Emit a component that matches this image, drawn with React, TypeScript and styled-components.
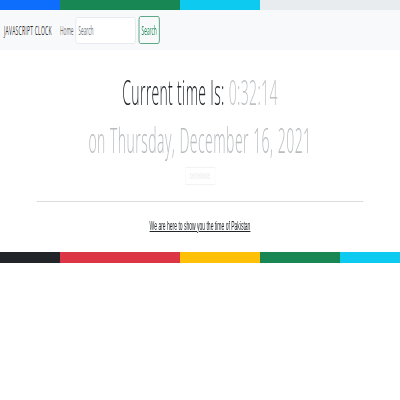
import React from 'react';
import styled, { createGlobalStyle } from 'styled-components';

// the reference is a wide page squeezed into 400px, so the layout is built
// at 1000px and squeezed once at the root
const SCALE = 0.4;

const GlobalStyle = createGlobalStyle`
  html, body {
    margin: 0;
    padding: 0;
    background: #ffffff;
    overflow: hidden;
  }
  body {
    font-family: 'Open Sans', 'Liberation Sans', sans-serif;
    color: #212529;
  }
`;

const Stage = styled.div`
  width: ${400 / SCALE}px;
  transform: scaleX(${SCALE});
  transform-origin: 0 0;
`;

const ColorBar = styled.div`
  display: flex;
  height: 10px;
`;

const Segment = styled.div<{ $color: string; $w: number }>`
  width: ${(p) => p.$w}px;
  background: ${(p) => p.$color};
`;

const Navbar = styled.nav`
  height: 40px;
  background: #f8f9fa;
  display: flex;
  align-items: center;
  padding-left: 10px;
  box-sizing: border-box;
`;

const Brand = styled.a`
  font-size: 12.5px;
  letter-spacing: 0.6px;
  color: rgba(0, 0, 0, 0.85);
  margin-right: 14px;
  text-decoration: none;
  white-space: nowrap;
  width: 126px;
`;

const NavLink = styled.a`
  font-size: 12px;
  color: rgba(0, 0, 0, 0.6);
  margin-right: 5px;
  text-decoration: none;
`;

const SearchForm = styled.form`
  display: flex;
  align-items: center;
  gap: 8px;
`;

const SearchInput = styled.input`
  width: 150px;
  height: 27px;
  box-sizing: border-box;
  border: 1px solid #dee2e6;
  border-radius: 4px;
  background: #fff;
  padding: 0 6px;
  font-family: 'Open Sans', sans-serif;
  font-size: 12px;
  outline: none;
  &::placeholder {
    color: #6c757d;
  }
`;

const SearchButton = styled.button`
  width: 52px;
  height: 28px;
  border: 1px solid #198754;
  border-radius: 4px;
  background: transparent;
  color: #198754;
  font-family: 'Open Sans', sans-serif;
  font-size: 12px;
  padding: 0;
`;

const Main = styled.main`
  display: flex;
  flex-direction: column;
  align-items: center;
  padding-top: 21px;
`;

const Heading = styled.h1`
  margin: 0;
  font-weight: 300;
  font-size: 35px;
  line-height: 42px;
  color: #212529;
  letter-spacing: 0.85px;
`;

const Faded = styled.span`
  color: #bfc2c5;
`;

const DateLine = styled(Heading)`
  margin-top: 6px;
  color: #b9bcbf;
  letter-spacing: 1.2px;
`;

const ToggleButton = styled.button`
  margin-top: 6px;
  width: 75px;
  height: 18px;
  border: 1px solid #f3f3f3;
  background: #fff;
  color: #f0f0f0;
  font-family: 'Liberation Sans', sans-serif;
  font-weight: bold;
  font-size: 9px;
  padding: 0;
`;

const Rule = styled.hr`
  width: 816px;
  margin: 16px 0 0;
  border: 0;
  border-top: 1px solid #dcdcdc;
`;

const InfoLink = styled.a`
  margin-top: 17px;
  font-family: 'Liberation Sans', Arial, sans-serif;
  font-size: 12.5px;
  line-height: 14px;
  color: #212529;
  text-decoration: underline;
`;

const Footer = styled(ColorBar)`
  margin-top: 19px;
  height: 11px;
`;

const topBar = [
  { color: '#0d6efd', w: 150 },
  { color: '#198754', w: 300 },
  { color: '#0dcaf0', w: 200 },
  { color: '#e9ecef', w: 350 },
];

const bottomBar = [
  { color: '#212529', w: 150 },
  { color: '#dc3545', w: 300 },
  { color: '#ffc107', w: 200 },
  { color: '#198754', w: 200 },
  { color: '#0dcaf0', w: 150 },
];

const App = () => {
  return (
    <>
      <GlobalStyle />
      <Stage>
        <ColorBar>
          {topBar.map((s) => (
            <Segment key={s.color} $color={s.color} $w={s.w} />
          ))}
        </ColorBar>
        <Navbar>
          <Brand href="#">JAVASCRIPT CLOCK</Brand>
          <NavLink href="#">Home</NavLink>
          <SearchForm onSubmit={(e) => e.preventDefault()}>
            <SearchInput type="search" placeholder="Search" />
            <SearchButton type="submit">Search</SearchButton>
          </SearchForm>
        </Navbar>
        <Main>
          <Heading>
            Current time Is: <Faded>0:32:14</Faded>
          </Heading>
          <DateLine as="h2">on Thursday, December 16, 2021</DateLine>
          <ToggleButton>SHOW/HIDE</ToggleButton>
          <Rule />
          <InfoLink href="#">We are here to show you the time of Pakistan</InfoLink>
        </Main>
        <Footer>
          {bottomBar.map((s) => (
            <Segment key={s.color} $color={s.color} $w={s.w} />
          ))}
        </Footer>
      </Stage>
    </>
  );
};

export default App;
